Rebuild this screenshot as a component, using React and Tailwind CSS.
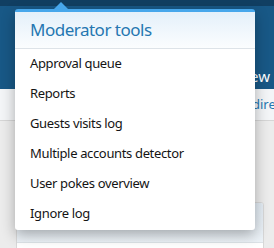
export default function App() {
  const items = [
    "Approval queue",
    "Reports",
    "Guests visits log",
    "Multiple accounts detector",
    "User pokes overview",
    "Ignore log",
  ];
  return (
    <div
      className="relative w-[274px] h-[248px] overflow-hidden bg-[#ececec]"
      style={{ fontFamily: '"Noto Sans", "Open Sans", sans-serif' }}
    >
      <div className="h-[6px] bg-[#113f62]" />
      <div className="h-[83px] bg-[#185886] pt-[60px] pr-[4px] flex justify-end text-[15px] leading-[20px] text-white whitespace-nowrap">
        What's new
      </div>
      <div className="h-[32px] bg-[#f3f5f7] border-b border-[#d6d6d6] pt-[6px] pl-[252px] text-[13px] leading-[18px] text-[#2577b1] whitespace-nowrap">
        {" "}directory
      </div>
      <div className="mt-[81px] ml-[16px] w-[248px] h-[60px] border border-[#d8d8d8] rounded-[3px] bg-white overflow-hidden">
        <div className="h-[40px] bg-gradient-to-b from-[#e2ebf3] to-[#edf3f8] border-b border-[#dde3e8]" />
      </div>

      <div className="absolute left-[15px] top-[9px] w-[240px]">
        <div className="absolute left-[39px] top-[-7px] w-0 h-0 border-l-[7px] border-r-[7px] border-b-[7px] border-l-transparent border-r-transparent border-b-[#47a7eb]" />
        <div className="border-t-[3px] border-[#47a7eb] bg-white rounded-[3px] shadow-[0_5px_14px_rgba(0,0,0,0.3)] overflow-hidden">
          <div className="h-[37px] bg-gradient-to-b from-[#e4f0fa] to-[#fbfdfe] border-b border-[#dde3e8] pl-[15px] flex items-center">
            <span className="text-[17px] tracking-[-0.5px] text-[#2577b1] leading-[22px]">Moderator tools</span>
          </div>
          <div className="pb-[1px]">
            {items.map((t) => (
              <div key={t} className="h-[30px] flex items-center px-[15px] text-[13px] tracking-[-0.35px] text-[#141414]">
                {t}
              </div>
            ))}
          </div>
        </div>
      </div>
    </div>
  );
}
